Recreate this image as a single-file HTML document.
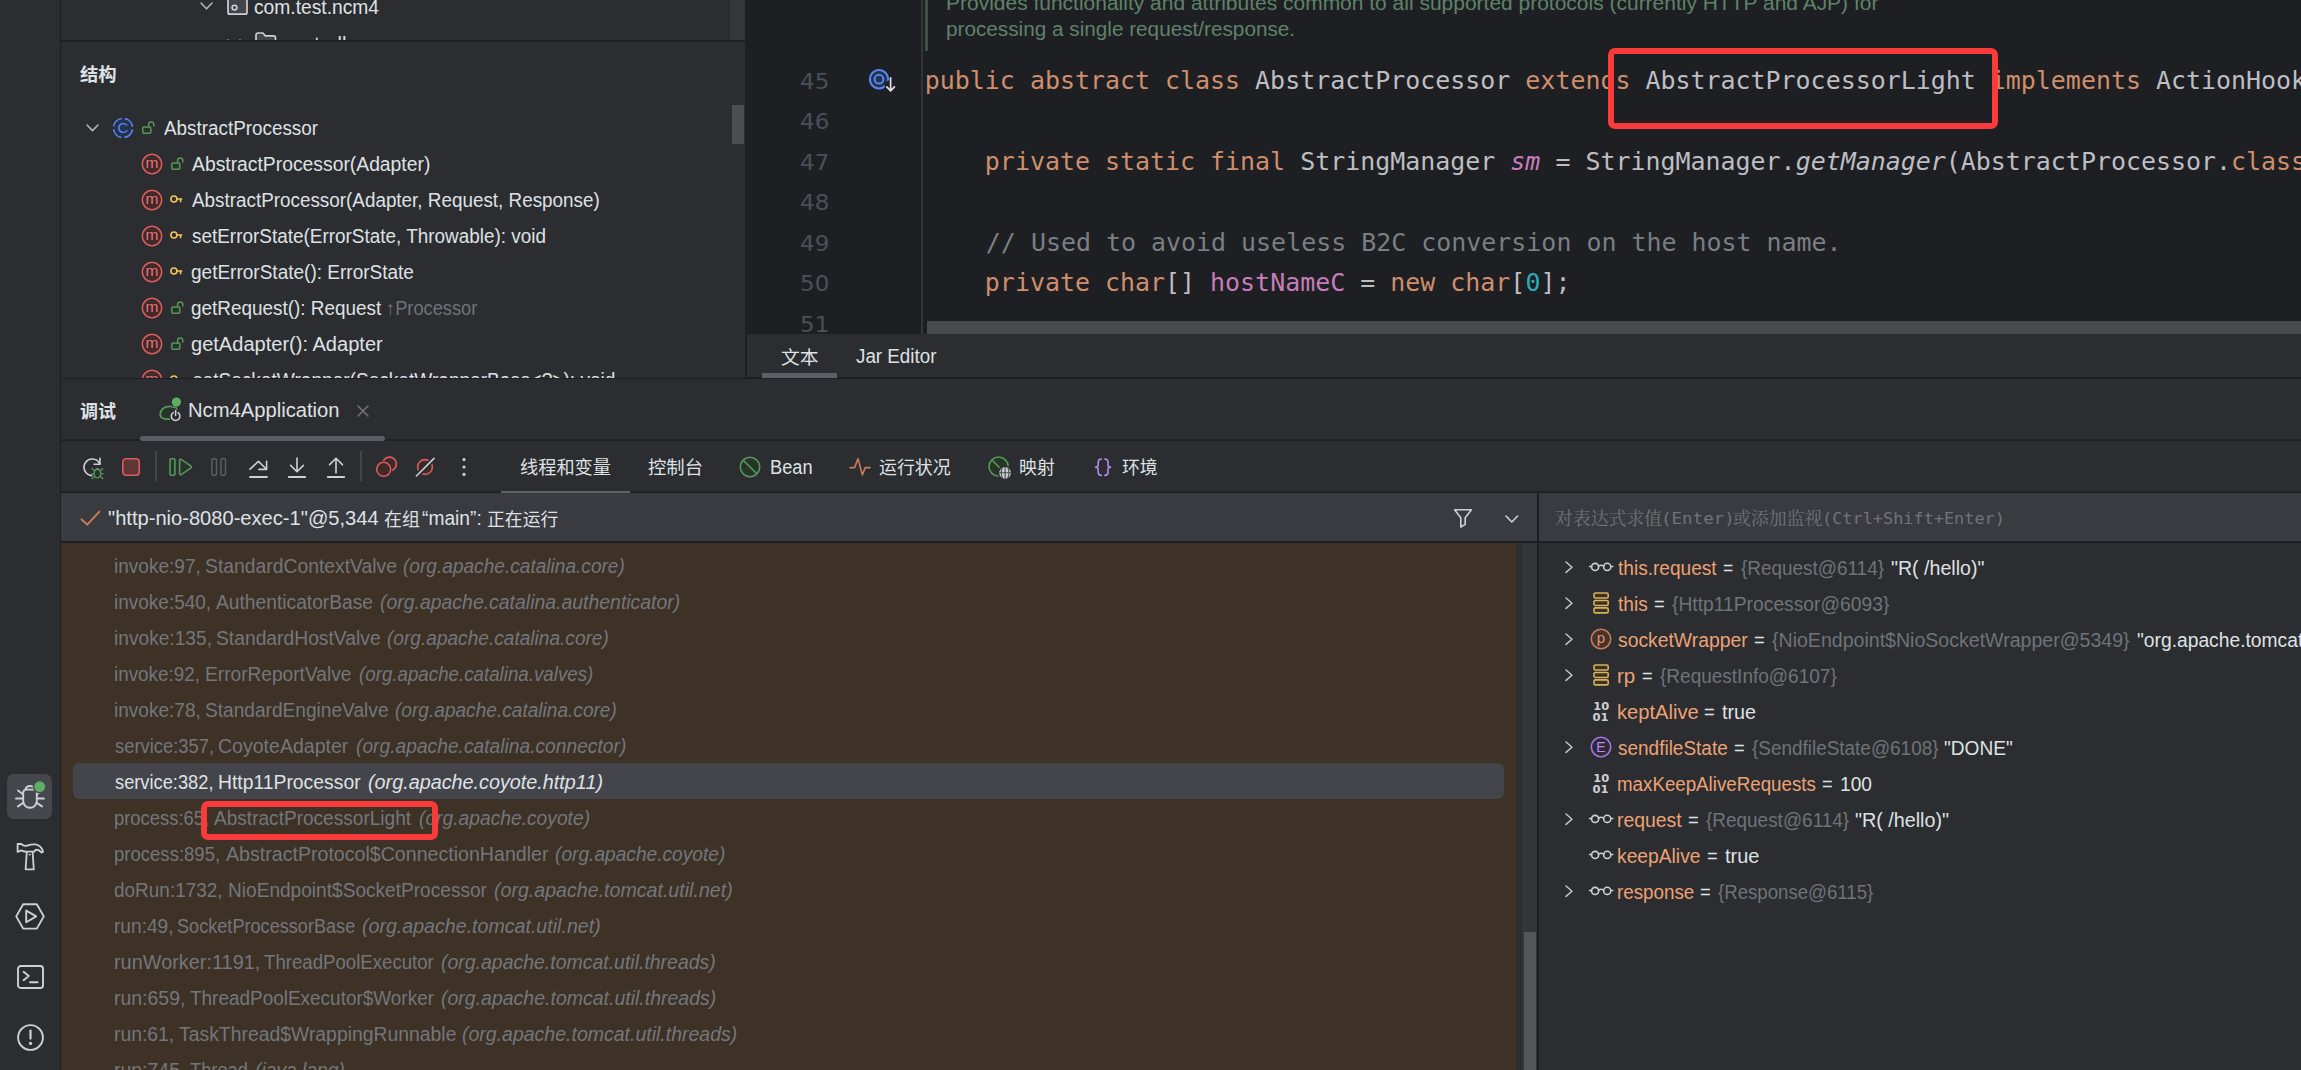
<!DOCTYPE html>
<html lang="zh-CN"><head><meta charset="utf-8"><title>IDE Debug</title>
<style>
html,body{margin:0;padding:0;background:#2b2d30;}
body{width:2301px;height:1070px;position:relative;overflow:hidden;}
#root{position:absolute;left:0;top:0;width:2301px;height:1070px;overflow:hidden;}
.t{position:absolute;white-space:pre;line-height:1.2;transform-origin:0 0;display:block;}
.clip{position:absolute;overflow:hidden;}
svg{display:block;overflow:visible}
</style></head><body><div id="root">
<div style="position:absolute;left:0px;top:0px;width:2301px;height:1070px;background:#2b2d30;"></div>
<div style="position:absolute;left:60px;top:0px;width:1px;height:1070px;background:#1e1f22;"></div>
<div style="position:absolute;left:730px;top:0px;width:15px;height:40px;background:#343639;"></div>
<div style="position:absolute;left:61px;top:40px;width:684px;height:2px;background:#1e1f22;"></div>
<div style="position:absolute;left:732px;top:105px;width:12px;height:39px;background:#4d4e51;"></div>
<div style="position:absolute;left:745px;top:0px;width:1556px;height:378px;background:#1e1f22;"></div>
<div style="position:absolute;left:921px;top:0px;width:2px;height:334px;background:#313438;"></div>
<div style="position:absolute;left:925px;top:0px;width:3px;height:51px;background:#3d5244;"></div>
<div style="position:absolute;left:927px;top:321px;width:1374px;height:13px;background:#48494c;"></div>
<div style="position:absolute;left:747px;top:334px;width:1554px;height:43px;background:#2b2d30;"></div>
<div style="position:absolute;left:61px;top:378px;width:2240px;height:1px;background:#1e1f22;"></div>
<div style="position:absolute;left:745px;top:377px;width:1556px;height:1px;background:#1e1f22;"></div>
<div style="position:absolute;left:762px;top:373px;width:75px;height:5px;background:#5c5f66;"></div>
<div style="position:absolute;left:61px;top:439px;width:2240px;height:1px;background:#222326;"></div>
<div style="position:absolute;left:61px;top:440px;width:2240px;height:1px;background:#1f2023;"></div>
<div style="position:absolute;left:140px;top:436px;width:245px;height:5px;background:#5a5d63;border-radius:3px;"></div>
<div style="position:absolute;left:61px;top:491px;width:2240px;height:1px;background:#242629;"></div>
<div style="position:absolute;left:61px;top:492px;width:2240px;height:1px;background:#1e1f22;"></div>
<div style="position:absolute;left:501px;top:491px;width:129px;height:2px;background:#5e6168;"></div>
<div style="position:absolute;left:61px;top:493px;width:1476px;height:48px;background:#393b40;"></div>
<div style="position:absolute;left:1539px;top:493px;width:762px;height:48px;background:#393b40;"></div>
<div style="position:absolute;left:61px;top:541px;width:2240px;height:2px;background:#1e1f22;"></div>
<div style="position:absolute;left:61px;top:543px;width:1455px;height:527px;background:#3e3125;"></div>
<div style="position:absolute;left:1522px;top:543px;width:15px;height:527px;background:#333539;"></div>
<div style="position:absolute;left:1524px;top:932px;width:12px;height:138px;background:#555658;"></div>
<div style="position:absolute;left:1537px;top:492px;width:2px;height:578px;background:#1e1f22;"></div>
<div style="position:absolute;left:73px;top:763px;width:1431px;height:36px;background:#43454a;border-radius:6px;"></div>
<div style="position:absolute;left:7.3px;top:774px;width:45px;height:45px;background:#45474c;border-radius:7px;"></div>
<div style="position:absolute;left:155px;top:451px;width:2px;height:30px;background:#43454a;"></div>
<div style="position:absolute;left:360px;top:451px;width:2px;height:30px;background:#43454a;"></div>
<svg style="position:absolute;left:15px;top:780px;" width="32" height="32" viewBox="0 0 32 32" fill="none"><path d="M8.2 12.6 A3 3 0 0 1 11.2 9.6 H18.8 A3 3 0 0 1 21.8 12.6 V21 A6.8 6.8 0 0 1 8.2 21 Z" stroke="#ced0d6" stroke-width="1.9"/><path d="M10.4 9.4 A4.8 4.8 0 0 1 19.6 9.4" stroke="#ced0d6" stroke-width="1.9"/><path d="M8 18.5 H1 M22 18.5 H29 M8 14.2 L3 10.6 M22 14.2 L27 10.6 M8.3 22.8 L3 26.4 M21.7 22.8 L27 26.4" stroke="#ced0d6" stroke-width="1.9" stroke-linecap="round"/><circle cx="24.7" cy="6.6" r="7" fill="#45474c"/><circle cx="24.7" cy="6.6" r="5.4" fill="#5fad65"/></svg>
<svg style="position:absolute;left:16px;top:842px;" width="30" height="30" viewBox="0 0 30 30" fill="none"><path d="M1.6 2 H5.2 C7 3.6 9 4.2 11 3.6 C14 2.6 17 2 19.4 2.4 C23.6 3.2 26.2 6 27 10 L25.4 10.6 C24 8.6 22 7.6 20 7.6 L18.2 9.6 H10.2 C8 9.6 6.6 8.8 5.2 8.4 L1.6 9.8 Z" stroke="#ced0d6" stroke-width="1.8" stroke-linejoin="round"/><path d="M10.8 9.8 L9.6 27.4 H17.8 L16.6 9.8" stroke="#ced0d6" stroke-width="1.8" stroke-linejoin="round"/><path d="M12.6 12.6 H14.8" stroke="#ced0d6" stroke-width="1.4"/></svg>
<svg style="position:absolute;left:15px;top:903px;" width="30" height="27" viewBox="0 0 30 27" fill="none"><path d="M8.2 1.2 H21.8 L28.8 13.4 L21.8 25.6 H8.2 L1.2 13.4 Z" stroke="#ced0d6" stroke-width="1.9" stroke-linejoin="round"/><path d="M11.2 7.6 V19.2 L21.2 13.4 Z" stroke="#ced0d6" stroke-width="1.9" stroke-linejoin="round"/></svg>
<svg style="position:absolute;left:16.5px;top:965px;" width="27" height="24" viewBox="0 0 27 24" fill="none"><rect x="1" y="1" width="25" height="22" rx="2.8" stroke="#ced0d6" stroke-width="1.9"/><path d="M6.6 6.8 L11.8 11 L6.6 15.2 M13 17.2 H20.6" stroke="#ced0d6" stroke-width="1.9" stroke-linecap="round" stroke-linejoin="round"/></svg>
<svg style="position:absolute;left:15.5px;top:1022.5px;" width="29" height="29" viewBox="0 0 29 29" fill="none"><circle cx="14.5" cy="14.5" r="12.4" stroke="#ced0d6" stroke-width="1.9"/><path d="M14.5 7.6 V15.6" stroke="#ced0d6" stroke-width="2.2" stroke-linecap="round"/><circle cx="14.5" cy="20.4" r="1.6" fill="#ced0d6"/></svg>
<svg style="position:absolute;left:198.5px;top:1.3000000000000003px;" width="15" height="9.8" viewBox="0 0 15 9.8" fill="none"><path d="M2 2 L7.5 7.8 L13 2" stroke="#b0b3ba" stroke-width="1.6" stroke-linecap="round" stroke-linejoin="round"/></svg>
<svg style="position:absolute;left:226.5px;top:0px;" width="22" height="16" viewBox="0 -1 22 16" fill="none"><path d="M1 -4 H7.5 L9.8 -1.8 H18 A2 2 0 0 1 20 0.2 V11.2 A2 2 0 0 1 18 13.2 H3 A2 2 0 0 1 1 11.2 Z" fill="#43454a" stroke="#ced0d6" stroke-width="1.7"/><circle cx="7.5" cy="6.6" r="2.4" stroke="#ced0d6" stroke-width="1.6"/></svg>
<div style="position:absolute;left:61px;top:30px;width:684px;height:10px;overflow:hidden;">
<svg style="position:absolute;left:165px;top:8px;" width="16" height="12" viewBox="0 0 16 12" fill="none"><path d="M2 2 L8 8.5 L14 2" stroke="#b0b3ba" stroke-width="1.6" stroke-linecap="round" stroke-linejoin="round"/></svg>
<svg style="position:absolute;left:194px;top:2.4px;" width="22" height="18" viewBox="0 0 22 18" fill="none"><path d="M1 3 A2 2 0 0 1 3 1 H7.8 L10.4 3.8 H18.5 A2 2 0 0 1 20.5 5.8 V16 H1 Z" fill="#43454a" stroke="#ced0d6" stroke-width="1.7"/></svg>
</div>
<svg style="position:absolute;left:84.6px;top:122.9px;" width="15" height="9.6" viewBox="0 0 15 9.6" fill="none"><path d="M2 2 L7.5 7.6 L13 2" stroke="#b0b3ba" stroke-width="1.6" stroke-linecap="round" stroke-linejoin="round"/></svg>
<svg style="position:absolute;left:111.1px;top:115.9px;" width="24" height="24" viewBox="0 0 24 24" fill="none"><circle cx="12" cy="12" r="9.6" fill="#25324d" stroke="#548af7" stroke-width="1.6" stroke-dasharray="12.08 3.00" stroke-dashoffset="-1.50" transform="rotate(0 12 12)"/><text x="12" y="17.3" text-anchor="middle" font-family="Liberation Sans, sans-serif" font-size="15" font-weight="normal" fill="#548af7">C</text></svg>
<svg style="position:absolute;left:142px;top:121px;" width="14" height="14" viewBox="0 0 14 14" fill="none"><rect x="0.8" y="6" width="8" height="6.2" rx="1" fill="#253627" stroke="#57965c" stroke-width="1.5"/><path d="M6.6 6 V3.6 A2.6 2.6 0 0 1 11.8 3.6 V5" stroke="#57965c" stroke-width="1.5" stroke-linecap="round"/></svg>
<svg style="position:absolute;left:140px;top:152px;" width="24" height="24" viewBox="0 0 24 24" fill="none"><circle cx="12" cy="12" r="9.7" fill="#402929" stroke="#db5c5c" stroke-width="1.6"/><text x="12" y="16.2" text-anchor="middle" font-family="Liberation Sans, sans-serif" font-size="15.5" font-weight="normal" fill="#e8737a">m</text></svg>
<svg style="position:absolute;left:170.5px;top:157px;" width="14" height="14" viewBox="0 0 14 14" fill="none"><rect x="0.8" y="6" width="8" height="6.2" rx="1" fill="#253627" stroke="#57965c" stroke-width="1.5"/><path d="M6.6 6 V3.6 A2.6 2.6 0 0 1 11.8 3.6 V5" stroke="#57965c" stroke-width="1.5" stroke-linecap="round"/></svg>
<svg style="position:absolute;left:140px;top:188px;" width="24" height="24" viewBox="0 0 24 24" fill="none"><circle cx="12" cy="12" r="9.7" fill="#402929" stroke="#db5c5c" stroke-width="1.6"/><text x="12" y="16.2" text-anchor="middle" font-family="Liberation Sans, sans-serif" font-size="15.5" font-weight="normal" fill="#e8737a">m</text></svg>
<svg style="position:absolute;left:169.6px;top:195.4px;" width="14" height="9" viewBox="0 0 14 9" fill="none"><circle cx="3.9" cy="4" r="3" stroke="#f2c55c" stroke-width="1.6"/><path d="M7 4 H12.2 M10.6 4 V7.2" stroke="#f2c55c" stroke-width="1.6"/></svg>
<svg style="position:absolute;left:140px;top:224px;" width="24" height="24" viewBox="0 0 24 24" fill="none"><circle cx="12" cy="12" r="9.7" fill="#402929" stroke="#db5c5c" stroke-width="1.6"/><text x="12" y="16.2" text-anchor="middle" font-family="Liberation Sans, sans-serif" font-size="15.5" font-weight="normal" fill="#e8737a">m</text></svg>
<svg style="position:absolute;left:169.6px;top:231.4px;" width="14" height="9" viewBox="0 0 14 9" fill="none"><circle cx="3.9" cy="4" r="3" stroke="#f2c55c" stroke-width="1.6"/><path d="M7 4 H12.2 M10.6 4 V7.2" stroke="#f2c55c" stroke-width="1.6"/></svg>
<svg style="position:absolute;left:140px;top:260px;" width="24" height="24" viewBox="0 0 24 24" fill="none"><circle cx="12" cy="12" r="9.7" fill="#402929" stroke="#db5c5c" stroke-width="1.6"/><text x="12" y="16.2" text-anchor="middle" font-family="Liberation Sans, sans-serif" font-size="15.5" font-weight="normal" fill="#e8737a">m</text></svg>
<svg style="position:absolute;left:169.6px;top:267.4px;" width="14" height="9" viewBox="0 0 14 9" fill="none"><circle cx="3.9" cy="4" r="3" stroke="#f2c55c" stroke-width="1.6"/><path d="M7 4 H12.2 M10.6 4 V7.2" stroke="#f2c55c" stroke-width="1.6"/></svg>
<svg style="position:absolute;left:140px;top:296px;" width="24" height="24" viewBox="0 0 24 24" fill="none"><circle cx="12" cy="12" r="9.7" fill="#402929" stroke="#db5c5c" stroke-width="1.6"/><text x="12" y="16.2" text-anchor="middle" font-family="Liberation Sans, sans-serif" font-size="15.5" font-weight="normal" fill="#e8737a">m</text></svg>
<svg style="position:absolute;left:170.5px;top:301px;" width="14" height="14" viewBox="0 0 14 14" fill="none"><rect x="0.8" y="6" width="8" height="6.2" rx="1" fill="#253627" stroke="#57965c" stroke-width="1.5"/><path d="M6.6 6 V3.6 A2.6 2.6 0 0 1 11.8 3.6 V5" stroke="#57965c" stroke-width="1.5" stroke-linecap="round"/></svg>
<svg style="position:absolute;left:140px;top:332px;" width="24" height="24" viewBox="0 0 24 24" fill="none"><circle cx="12" cy="12" r="9.7" fill="#402929" stroke="#db5c5c" stroke-width="1.6"/><text x="12" y="16.2" text-anchor="middle" font-family="Liberation Sans, sans-serif" font-size="15.5" font-weight="normal" fill="#e8737a">m</text></svg>
<svg style="position:absolute;left:170.5px;top:337px;" width="14" height="14" viewBox="0 0 14 14" fill="none"><rect x="0.8" y="6" width="8" height="6.2" rx="1" fill="#253627" stroke="#57965c" stroke-width="1.5"/><path d="M6.6 6 V3.6 A2.6 2.6 0 0 1 11.8 3.6 V5" stroke="#57965c" stroke-width="1.5" stroke-linecap="round"/></svg>
<div style="position:absolute;left:61px;top:362px;width:671px;height:16px;overflow:hidden;">
<svg style="position:absolute;left:79px;top:6px;" width="24" height="24" viewBox="0 0 24 24" fill="none"><circle cx="12" cy="12" r="9.7" fill="#402929" stroke="#db5c5c" stroke-width="1.6"/><text x="12" y="16.2" text-anchor="middle" font-family="Liberation Sans, sans-serif" font-size="15.5" font-weight="normal" fill="#e8737a">m</text></svg>
<svg style="position:absolute;left:108.6px;top:13.399999999999977px;" width="14" height="9" viewBox="0 0 14 9" fill="none"><circle cx="3.9" cy="4" r="3" stroke="#f2c55c" stroke-width="1.6"/><path d="M7 4 H12.2 M10.6 4 V7.2" stroke="#f2c55c" stroke-width="1.6"/></svg>
</div>
<svg style="position:absolute;left:868px;top:68px;" width="30" height="26" viewBox="0 0 30 26" fill="none"><circle cx="11" cy="11.2" r="9.2" fill="#25324d" stroke="#548af7" stroke-width="2"/><circle cx="11" cy="11.2" r="4.4" stroke="#548af7" stroke-width="2" fill="#25324d"/><circle cx="22.6" cy="18" r="6" fill="#1e1f22"/><path d="M22.6 9.8 V22.6 M18.8 18.8 L22.6 22.8 L26.4 18.8" stroke="#dcdee2" stroke-width="1.7" stroke-linecap="round" stroke-linejoin="round"/></svg>
<svg style="position:absolute;left:159px;top:396.5px;" width="24" height="26" viewBox="0 0 24 26" fill="none"><path d="M12 9.5 C6 9 1.2 12.2 1.2 17.2 C1.2 21.5 5 22.3 10.5 22.1" stroke="#57965c" stroke-width="1.7" fill="#253627" stroke-linecap="round"/><path d="M12 9.5 C13.5 10.5 15.5 10.6 17 9.6 L18.2 14" stroke="#57965c" stroke-width="1.5" fill="none"/><circle cx="17.4" cy="5" r="4.6" fill="#5fad65"/><circle cx="16.6" cy="18.6" r="6.2" fill="#2b2d30"/><path d="M14.2 15.6 A4.3 4.3 0 1 0 19 15.6 M16.6 13.4 V18.4" stroke="#ced0d6" stroke-width="1.5" stroke-linecap="round"/></svg>
<svg style="position:absolute;left:356px;top:404px;" width="14" height="14" viewBox="0 0 14 14" fill="none"><path d="M2 2 L12 12 M12 2 L2 12" stroke="#71757b" stroke-width="1.5" stroke-linecap="round"/></svg>
<svg style="position:absolute;left:80.8px;top:455px;" width="24" height="26" viewBox="0 0 24 26" fill="none"><path d="M10.6 20.6 A8.3 8.3 0 1 1 18.6 8.4" stroke="#ced0d6" stroke-width="1.6" stroke-linecap="round"/><path d="M13.2 9.3 H19 V3.4" stroke="#ced0d6" stroke-width="1.6" stroke-linecap="round" stroke-linejoin="round"/><ellipse cx="16.4" cy="18.6" rx="3.3" ry="4.3" fill="#253627" stroke="#57965c" stroke-width="1.4"/><path d="M13.2 15.6 L11 13.6 M19.6 15.6 L21.8 13.6 M13 18.8 H10.6 M19.8 18.8 H22.2 M13.4 21.6 L11 23.6 M19.4 21.6 L21.8 23.6 M14.6 14.8 A2 2 0 0 1 18.2 14.8" stroke="#57965c" stroke-width="1.3" stroke-linecap="round"/></svg>
<svg style="position:absolute;left:121px;top:457px;" width="20" height="20" viewBox="0 0 20 20" fill="none"><rect x="1.8" y="1.8" width="16.4" height="16.4" rx="3.2" fill="#5e3638" stroke="#db5c5c" stroke-width="1.6"/></svg>
<svg style="position:absolute;left:168.9px;top:457px;" width="25" height="20" viewBox="0 0 25 20" fill="none"><rect x="1" y="1.8" width="4.9" height="16.4" rx="1.2" fill="#253627" stroke="#57965c" stroke-width="1.6"/><path d="M10.6 3.2 V16.8 A1 1 0 0 0 12.1 17.6 L22 10.8 A1 1 0 0 0 22 9.2 L12.1 2.4 A1 1 0 0 0 10.6 3.2 Z" fill="#253627" stroke="#57965c" stroke-width="1.6" stroke-linejoin="round"/></svg>
<svg style="position:absolute;left:211.3px;top:457px;" width="17" height="20" viewBox="0 0 17 20" fill="none"><rect x="0.9" y="1.8" width="4.6" height="16.4" rx="1.2" stroke="#5a5d63" stroke-width="1.5"/><rect x="9.9" y="1.8" width="4.6" height="16.4" rx="1.2" stroke="#5a5d63" stroke-width="1.5"/></svg>
<svg style="position:absolute;left:248.7px;top:460.3px;" width="20" height="19" viewBox="0 0 20 19" fill="none"><path d="M1 9.2 L9.4 1.4 L17.4 9" stroke="#ced0d6" stroke-width="1.6" stroke-linecap="round" stroke-linejoin="round"/><path d="M17.6 1.4 V9.4 H9.8" stroke="#ced0d6" stroke-width="1.6" stroke-linecap="round" stroke-linejoin="round"/><path d="M1 17 H18" stroke="#ced0d6" stroke-width="1.8" stroke-linecap="round"/></svg>
<svg style="position:absolute;left:287px;top:456px;" width="20" height="23" viewBox="0 0 20 23" fill="none"><path d="M10 2 V15.4 M3.6 9.4 L10 15.8 L16.4 9.4" stroke="#ced0d6" stroke-width="1.6" stroke-linecap="round" stroke-linejoin="round"/><path d="M1.8 21 H18.2" stroke="#ced0d6" stroke-width="1.8" stroke-linecap="round"/></svg>
<svg style="position:absolute;left:326px;top:456px;" width="20" height="23" viewBox="0 0 20 23" fill="none"><path d="M10 17 V2.4 M3.6 8.6 L10 2.2 L16.4 8.6" stroke="#ced0d6" stroke-width="1.6" stroke-linecap="round" stroke-linejoin="round"/><path d="M1.8 21 H18.2" stroke="#ced0d6" stroke-width="1.8" stroke-linecap="round"/></svg>
<svg style="position:absolute;left:374px;top:456px;" width="25" height="24" viewBox="0 0 25 24" fill="none"><circle cx="15.5" cy="8" r="6.9" fill="#402929" stroke="#db5c5c" stroke-width="1.6"/><circle cx="9.7" cy="13.3" r="8.6" fill="#2b2d30"/><circle cx="9.7" cy="13.3" r="7" fill="#402929" stroke="#db5c5c" stroke-width="1.6"/></svg>
<svg style="position:absolute;left:414px;top:456px;" width="22" height="22" viewBox="0 0 22 22" fill="none"><circle cx="11" cy="11" r="7.4" fill="#402929" stroke="#db5c5c" stroke-width="1.6"/><path d="M2 20.4 L20.4 2" stroke="#2b2d30" stroke-width="5"/><path d="M2.4 20 L20 2.4" stroke="#ced0d6" stroke-width="1.6" stroke-linecap="round"/></svg>
<svg style="position:absolute;left:460px;top:456px;" width="8" height="22" viewBox="0 0 8 22" fill="none"><circle cx="4" cy="3.6" r="1.6" fill="#ced0d6"/><circle cx="4" cy="11" r="1.6" fill="#ced0d6"/><circle cx="4" cy="18.4" r="1.6" fill="#ced0d6"/></svg>
<svg style="position:absolute;left:738px;top:455px;" width="24" height="24" viewBox="0 0 24 24" fill="none"><circle cx="12" cy="12" r="9.7" fill="#253627" stroke="#57965c" stroke-width="1.6"/><path d="M5.2 5.2 L18.8 18.8" stroke="#57965c" stroke-width="1.6"/></svg>
<svg style="position:absolute;left:849px;top:456px;" width="22" height="22" viewBox="0 0 22 22" fill="none"><path d="M1 11.6 H5.6 L9 2.6 L13.4 19 L16.2 11.6 H21" stroke="#c77d55" stroke-width="1.6" stroke-linecap="round" stroke-linejoin="round"/></svg>
<svg style="position:absolute;left:988px;top:456px;" width="24" height="24" viewBox="0 0 24 24" fill="none"><circle cx="10.6" cy="10.6" r="9.6" fill="#253627" stroke="#57965c" stroke-width="1.6"/><path d="M4.2 4.2 L12.6 12.6" stroke="#57965c" stroke-width="1.6"/><circle cx="17.1" cy="16.8" r="7.4" fill="#2b2d30"/><circle cx="17.1" cy="16.8" r="5.9" fill="#ced0d6"/><path d="M11.2 16.8 H23 M17.1 10.9 V22.7 M14.4 11.6 C12.9 14.8 12.9 18.8 14.4 22 M19.8 11.6 C21.3 14.8 21.3 18.8 19.8 22" stroke="#45474c" stroke-width="1.1"/></svg>
<svg style="position:absolute;left:1093.8px;top:457.7px;" width="19" height="19" viewBox="0 0 19 19" fill="none"><path d="M7.4 1 C5 1 4.2 2 4.2 4.2 V7 C4.2 8.6 3.4 9.2 1 9.2 C3.4 9.2 4.2 9.8 4.2 11.4 V14.2 C4.2 16.4 5 17.4 7.4 17.4" stroke="#b58af0" stroke-width="1.6" stroke-linecap="round"/><path d="M10.8 1 C13.2 1 14 2 14 4.2 V7 C14 8.6 14.8 9.2 17.2 9.2 C14.8 9.2 14 9.8 14 11.4 V14.2 C14 16.4 13.2 17.4 10.8 17.4" stroke="#b58af0" stroke-width="1.6" stroke-linecap="round"/></svg>
<svg style="position:absolute;left:80px;top:509px;" width="22" height="18" viewBox="0 0 22 18" fill="none"><path d="M1.6 10.4 L7.2 15.6 L19.4 2.6" stroke="#c77d55" stroke-width="2" stroke-linecap="round" stroke-linejoin="round"/></svg>
<svg style="position:absolute;left:1453px;top:507.6px;" width="20" height="21" viewBox="0 0 20 21" fill="none"><path d="M1.6 1.8 H18.4 L12.2 9.8 V16.4 L7.8 19 V9.8 Z" stroke="#ced0d6" stroke-width="1.6" stroke-linejoin="round"/></svg>
<svg style="position:absolute;left:1504.2px;top:513.9px;" width="15.6" height="10" viewBox="0 0 15.6 10" fill="none"><path d="M2 2 L7.8 8 L13.6 2" stroke="#ced0d6" stroke-width="1.6" stroke-linecap="round" stroke-linejoin="round"/></svg>
<svg style="position:absolute;left:1563.6px;top:560.0px;" width="10.0" height="14.4" viewBox="0 0 10.0 14.4" fill="none"><path d="M2 2 L8.0 7.2 L2 12.4" stroke="#c4c7cd" stroke-width="1.5" stroke-linecap="round" stroke-linejoin="round"/></svg>
<svg style="position:absolute;left:1588.8px;top:560.8px;" width="24.4" height="12" viewBox="0 0 24.4 12" fill="none"><circle cx="6.1" cy="5.9" r="3.55" stroke="#ced0d6" stroke-width="1.6"/><circle cx="18.2" cy="5.9" r="3.55" stroke="#ced0d6" stroke-width="1.5"/><path d="M9.6 5.2 C11 4.2 13.3 4.2 14.7 5.2 M2.5 5.6 H0.5 M21.8 5.6 H23.8" stroke="#ced0d6" stroke-width="1.5" stroke-linecap="round"/></svg>
<svg style="position:absolute;left:1563.6px;top:596.0px;" width="10.0" height="14.4" viewBox="0 0 10.0 14.4" fill="none"><path d="M2 2 L8.0 7.2 L2 12.4" stroke="#c4c7cd" stroke-width="1.5" stroke-linecap="round" stroke-linejoin="round"/></svg>
<svg style="position:absolute;left:1592.9px;top:591.9px;" width="17" height="23" viewBox="0 0 17 23" fill="none"><rect x="1" y="1" width="14.2" height="5" rx="1.4" fill="#3d3223" stroke="#d9b25c" stroke-width="1.6"/><rect x="1" y="8.45" width="14.2" height="5" rx="1.4" fill="#3d3223" stroke="#d9b25c" stroke-width="1.6"/><rect x="1" y="15.9" width="14.2" height="5" rx="1.4" fill="#3d3223" stroke="#d9b25c" stroke-width="1.6"/></svg>
<svg style="position:absolute;left:1563.6px;top:632.0px;" width="10.0" height="14.4" viewBox="0 0 10.0 14.4" fill="none"><path d="M2 2 L8.0 7.2 L2 12.4" stroke="#c4c7cd" stroke-width="1.5" stroke-linecap="round" stroke-linejoin="round"/></svg>
<svg style="position:absolute;left:1589px;top:627px;" width="24" height="24" viewBox="0 0 24 24" fill="none"><circle cx="12" cy="12" r="9.7" fill="#45322b" stroke="#c77d55" stroke-width="1.6"/><text x="12" y="15.6" text-anchor="middle" font-family="Liberation Sans, sans-serif" font-size="15" font-weight="normal" fill="#e0956f">p</text></svg>
<svg style="position:absolute;left:1563.6px;top:668.0px;" width="10.0" height="14.4" viewBox="0 0 10.0 14.4" fill="none"><path d="M2 2 L8.0 7.2 L2 12.4" stroke="#c4c7cd" stroke-width="1.5" stroke-linecap="round" stroke-linejoin="round"/></svg>
<svg style="position:absolute;left:1592.9px;top:663.9px;" width="17" height="23" viewBox="0 0 17 23" fill="none"><rect x="1" y="1" width="14.2" height="5" rx="1.4" fill="#3d3223" stroke="#d9b25c" stroke-width="1.6"/><rect x="1" y="8.45" width="14.2" height="5" rx="1.4" fill="#3d3223" stroke="#d9b25c" stroke-width="1.6"/><rect x="1" y="15.9" width="14.2" height="5" rx="1.4" fill="#3d3223" stroke="#d9b25c" stroke-width="1.6"/></svg>
<svg style="position:absolute;left:1592.8px;top:700.9000000000001px;" width="17" height="21" viewBox="0 0 17 21" fill="none"><text x="0.2" y="8.6" font-family="DejaVu Sans, Liberation Sans, sans-serif" font-weight="bold" font-size="10.4" fill="#ced0d6" textLength="16" lengthAdjust="spacingAndGlyphs">10</text><text x="-0.4" y="20.4" font-family="DejaVu Sans, Liberation Sans, sans-serif" font-weight="bold" font-size="10.4" fill="#ced0d6" textLength="16" lengthAdjust="spacingAndGlyphs">01</text></svg>
<svg style="position:absolute;left:1563.6px;top:740.0px;" width="10.0" height="14.4" viewBox="0 0 10.0 14.4" fill="none"><path d="M2 2 L8.0 7.2 L2 12.4" stroke="#c4c7cd" stroke-width="1.5" stroke-linecap="round" stroke-linejoin="round"/></svg>
<svg style="position:absolute;left:1589px;top:735px;" width="24" height="24" viewBox="0 0 24 24" fill="none"><circle cx="12" cy="12" r="9.7" fill="#2f2936" stroke="#a571e6" stroke-width="1.6"/><text x="12" y="17" text-anchor="middle" font-family="Liberation Sans, sans-serif" font-size="14" font-weight="normal" fill="#b58af0">E</text></svg>
<svg style="position:absolute;left:1592.8px;top:772.9000000000001px;" width="17" height="21" viewBox="0 0 17 21" fill="none"><text x="0.2" y="8.6" font-family="DejaVu Sans, Liberation Sans, sans-serif" font-weight="bold" font-size="10.4" fill="#ced0d6" textLength="16" lengthAdjust="spacingAndGlyphs">10</text><text x="-0.4" y="20.4" font-family="DejaVu Sans, Liberation Sans, sans-serif" font-weight="bold" font-size="10.4" fill="#ced0d6" textLength="16" lengthAdjust="spacingAndGlyphs">01</text></svg>
<svg style="position:absolute;left:1563.6px;top:812.0px;" width="10.0" height="14.4" viewBox="0 0 10.0 14.4" fill="none"><path d="M2 2 L8.0 7.2 L2 12.4" stroke="#c4c7cd" stroke-width="1.5" stroke-linecap="round" stroke-linejoin="round"/></svg>
<svg style="position:absolute;left:1588.8px;top:812.8px;" width="24.4" height="12" viewBox="0 0 24.4 12" fill="none"><circle cx="6.1" cy="5.9" r="3.55" stroke="#ced0d6" stroke-width="1.6"/><circle cx="18.2" cy="5.9" r="3.55" stroke="#ced0d6" stroke-width="1.5"/><path d="M9.6 5.2 C11 4.2 13.3 4.2 14.7 5.2 M2.5 5.6 H0.5 M21.8 5.6 H23.8" stroke="#ced0d6" stroke-width="1.5" stroke-linecap="round"/></svg>
<svg style="position:absolute;left:1588.8px;top:848.8px;" width="24.4" height="12" viewBox="0 0 24.4 12" fill="none"><circle cx="6.1" cy="5.9" r="3.55" stroke="#ced0d6" stroke-width="1.6"/><circle cx="18.2" cy="5.9" r="3.55" stroke="#ced0d6" stroke-width="1.5"/><path d="M9.6 5.2 C11 4.2 13.3 4.2 14.7 5.2 M2.5 5.6 H0.5 M21.8 5.6 H23.8" stroke="#ced0d6" stroke-width="1.5" stroke-linecap="round"/></svg>
<svg style="position:absolute;left:1563.6px;top:884.0px;" width="10.0" height="14.4" viewBox="0 0 10.0 14.4" fill="none"><path d="M2 2 L8.0 7.2 L2 12.4" stroke="#c4c7cd" stroke-width="1.5" stroke-linecap="round" stroke-linejoin="round"/></svg>
<svg style="position:absolute;left:1588.8px;top:884.8px;" width="24.4" height="12" viewBox="0 0 24.4 12" fill="none"><circle cx="6.1" cy="5.9" r="3.55" stroke="#ced0d6" stroke-width="1.6"/><circle cx="18.2" cy="5.9" r="3.55" stroke="#ced0d6" stroke-width="1.5"/><path d="M9.6 5.2 C11 4.2 13.3 4.2 14.7 5.2 M2.5 5.6 H0.5 M21.8 5.6 H23.8" stroke="#ced0d6" stroke-width="1.5" stroke-linecap="round"/></svg>
<span class="t" style="left:80.00px;top:64.60px;font-family:'Liberation Sans', 'Noto Sans CJK SC', sans-serif;font-size:18px;font-weight:bold;color:#dfe1e5;transform:scaleX(1.0171)">结构</span>
<span class="t" style="left:164.40px;top:117.00px;font-family:'Liberation Sans', sans-serif;font-size:19.4px;color:#dfe1e5;transform:scaleX(0.9723)">AbstractProcessor</span>
<span class="t" style="left:192.20px;top:153.00px;font-family:'Liberation Sans', sans-serif;font-size:19.4px;color:#dfe1e5;transform:scaleX(0.9962)">AbstractProcessor(Adapter)</span>
<span class="t" style="left:192.20px;top:189.00px;font-family:'Liberation Sans', sans-serif;font-size:19.4px;color:#dfe1e5;transform:scaleX(0.9725)">AbstractProcessor(Adapter, Request, Response)</span>
<span class="t" style="left:192.20px;top:225.00px;font-family:'Liberation Sans', sans-serif;font-size:19.4px;color:#dfe1e5;transform:scaleX(0.9757)">setErrorState(ErrorState, Throwable): void</span>
<span class="t" style="left:191.22px;top:261.00px;font-family:'Liberation Sans', sans-serif;font-size:19.4px;color:#dfe1e5;transform:scaleX(0.9805)">getErrorState(): ErrorState</span>
<span class="t" style="left:191.22px;top:297.00px;font-family:'Liberation Sans', sans-serif;font-size:19.4px;color:#dfe1e5;transform:scaleX(0.9753)">getRequest(): Request</span>
<span class="t" style="left:386.32px;top:297.00px;font-family:'Liberation Sans', 'Noto Sans CJK SC', sans-serif;font-size:19.4px;color:#6f737a;transform:scaleX(0.9421)">↑Processor</span>
<span class="t" style="left:191.17px;top:333.00px;font-family:'Liberation Sans', sans-serif;font-size:19.4px;color:#dfe1e5;transform:scaleX(1.0341)">getAdapter(): Adapter</span>
<span class="t" style="left:945.82px;top:-8.50px;font-family:'Liberation Sans', sans-serif;font-size:19.5px;color:#5f826b;transform:scaleX(1.0758)">Provides functionality and attributes common to all supported protocols (currently HTTP and AJP) for</span>
<span class="t" style="left:945.84px;top:17.60px;font-family:'Liberation Sans', sans-serif;font-size:19.5px;color:#5f826b;transform:scaleX(1.0629)">processing a single request/response.</span>
<span class="t" style="left:780.96px;top:347.80px;font-family:'Liberation Sans', 'Noto Sans CJK SC', sans-serif;font-size:18px;color:#dfe1e5;transform:scaleX(1.0412)">文本</span>
<span class="t" style="left:855.60px;top:345.00px;font-family:'Liberation Sans', sans-serif;font-size:19.4px;color:#dfe1e5;transform:scaleX(0.9687)">Jar Editor</span>
<span class="t" style="left:80.00px;top:402.00px;font-family:'Liberation Sans', 'Noto Sans CJK SC', sans-serif;font-size:18px;font-weight:bold;color:#dfe1e5;transform:scaleX(1.0000)">调试</span>
<span class="t" style="left:188.46px;top:398.80px;font-family:'Liberation Sans', sans-serif;font-size:19.4px;color:#dfe1e5;transform:scaleX(1.0417)">Ncm4Application</span>
<span class="t" style="left:519.99px;top:458.30px;font-family:'Liberation Sans', 'Noto Sans CJK SC', sans-serif;font-size:18px;color:#dfe1e5;transform:scaleX(1.0112)">线程和变量</span>
<span class="t" style="left:648.00px;top:458.30px;font-family:'Liberation Sans', 'Noto Sans CJK SC', sans-serif;font-size:18px;color:#dfe1e5;transform:scaleX(1.0189)">控制台</span>
<span class="t" style="left:770.06px;top:456.00px;font-family:'Liberation Sans', sans-serif;font-size:19.4px;color:#dfe1e5;transform:scaleX(0.9395)">Bean</span>
<span class="t" style="left:879.40px;top:458.30px;font-family:'Liberation Sans', 'Noto Sans CJK SC', sans-serif;font-size:18px;color:#dfe1e5;transform:scaleX(0.9944)">运行状况</span>
<span class="t" style="left:1018.61px;top:458.30px;font-family:'Liberation Sans', 'Noto Sans CJK SC', sans-serif;font-size:18px;color:#dfe1e5;transform:scaleX(0.9943)">映射</span>
<span class="t" style="left:1122.40px;top:458.30px;font-family:'Liberation Sans', 'Noto Sans CJK SC', sans-serif;font-size:18px;color:#dfe1e5;transform:scaleX(0.9889)">环境</span>
<span class="t" style="left:108.36px;top:507.20px;font-family:'Liberation Sans', sans-serif;font-size:19.4px;color:#dfe1e5;transform:scaleX(1.0373)">"http-nio-8080-exec-1"@5,344</span>
<span class="t" style="left:384.41px;top:509.60px;font-family:'Liberation Sans', 'Noto Sans CJK SC', sans-serif;font-size:18px;color:#dfe1e5;transform:scaleX(0.9943)">在组</span>
<span class="t" style="left:422.30px;top:507.20px;font-family:'Liberation Sans', sans-serif;font-size:19.4px;color:#dfe1e5;transform:scaleX(0.9898)">“main”:</span>
<span class="t" style="left:486.61px;top:509.60px;font-family:'Liberation Sans', 'Noto Sans CJK SC', sans-serif;font-size:18px;color:#dfe1e5;transform:scaleX(0.9901)">正在运行</span>
<span class="t" style="left:1554.99px;top:509.00px;font-family:'DejaVu Sans Mono', 'Noto Serif CJK SC', serif;font-size:17.7px;color:#6f737a;transform:scaleX(1.0095)">对表达式求值</span>
<span class="t" style="left:1661.42px;top:509.00px;font-family:'DejaVu Sans Mono', 'Liberation Mono', monospace;font-size:16.5px;color:#6f737a;transform:scaleX(1.0603)">(Enter)</span>
<span class="t" style="left:1732.99px;top:509.00px;font-family:'DejaVu Sans Mono', 'Noto Serif CJK SC', serif;font-size:17.7px;color:#6f737a;transform:scaleX(1.0115)">或添加监视</span>
<span class="t" style="left:1821.53px;top:509.00px;font-family:'DejaVu Sans Mono', 'Liberation Mono', monospace;font-size:16.5px;color:#6f737a;transform:scaleX(1.0231)">(Ctrl+Shift+Enter)</span>
<span class="t" style="left:114.02px;top:554.60px;font-family:'Liberation Sans', sans-serif;font-size:19.4px;color:#73777d;transform:scaleX(0.9814)">invoke:97,</span>
<span class="t" style="left:204.60px;top:554.60px;font-family:'Liberation Sans', sans-serif;font-size:19.4px;color:#73777d;transform:scaleX(0.9969)">StandardContextValve</span>
<span class="t" style="left:403.02px;top:554.60px;font-family:'Liberation Sans', sans-serif;font-size:19.4px;font-style:italic;color:#73777d;transform:scaleX(0.9848)">(org.apache.catalina.core)</span>
<span class="t" style="left:114.02px;top:590.60px;font-family:'Liberation Sans', sans-serif;font-size:19.4px;color:#73777d;transform:scaleX(0.9794)">invoke:540,</span>
<span class="t" style="left:216.40px;top:590.60px;font-family:'Liberation Sans', sans-serif;font-size:19.4px;color:#73777d;transform:scaleX(0.9911)">AuthenticatorBase</span>
<span class="t" style="left:380.00px;top:590.60px;font-family:'Liberation Sans', sans-serif;font-size:19.4px;font-style:italic;color:#73777d;transform:scaleX(1.0020)">(org.apache.catalina.authenticator)</span>
<span class="t" style="left:114.01px;top:626.60px;font-family:'Liberation Sans', sans-serif;font-size:19.4px;color:#73777d;transform:scaleX(0.9876)">invoke:135,</span>
<span class="t" style="left:216.01px;top:626.60px;font-family:'Liberation Sans', sans-serif;font-size:19.4px;color:#73777d;transform:scaleX(0.9939)">StandardHostValve</span>
<span class="t" style="left:387.02px;top:626.60px;font-family:'Liberation Sans', sans-serif;font-size:19.4px;font-style:italic;color:#73777d;transform:scaleX(0.9848)">(org.apache.catalina.core)</span>
<span class="t" style="left:114.03px;top:662.60px;font-family:'Liberation Sans', sans-serif;font-size:19.4px;color:#73777d;transform:scaleX(0.9721)">invoke:92,</span>
<span class="t" style="left:205.01px;top:662.60px;font-family:'Liberation Sans', sans-serif;font-size:19.4px;color:#73777d;transform:scaleX(0.9864)">ErrorReportValve</span>
<span class="t" style="left:358.63px;top:662.60px;font-family:'Liberation Sans', sans-serif;font-size:19.4px;font-style:italic;color:#73777d;transform:scaleX(0.9660)">(org.apache.catalina.valves)</span>
<span class="t" style="left:114.02px;top:698.60px;font-family:'Liberation Sans', sans-serif;font-size:19.4px;color:#73777d;transform:scaleX(0.9814)">invoke:78,</span>
<span class="t" style="left:204.61px;top:698.60px;font-family:'Liberation Sans', sans-serif;font-size:19.4px;color:#73777d;transform:scaleX(0.9859)">StandardEngineValve</span>
<span class="t" style="left:395.02px;top:698.60px;font-family:'Liberation Sans', sans-serif;font-size:19.4px;font-style:italic;color:#73777d;transform:scaleX(0.9848)">(org.apache.catalina.core)</span>
<span class="t" style="left:115.00px;top:734.60px;font-family:'Liberation Sans', sans-serif;font-size:19.4px;color:#73777d;transform:scaleX(0.9476)">service:357,</span>
<span class="t" style="left:217.99px;top:734.60px;font-family:'Liberation Sans', sans-serif;font-size:19.4px;color:#73777d;transform:scaleX(1.0078)">CoyoteAdapter</span>
<span class="t" style="left:356.01px;top:734.60px;font-family:'Liberation Sans', sans-serif;font-size:19.4px;font-style:italic;color:#73777d;transform:scaleX(0.9911)">(org.apache.catalina.connector)</span>
<span class="t" style="left:115.00px;top:770.60px;font-family:'Liberation Sans', sans-serif;font-size:19.4px;color:#dfe1e5;transform:scaleX(0.9417)">service:382,</span>
<span class="t" style="left:218.40px;top:770.60px;font-family:'Liberation Sans', sans-serif;font-size:19.4px;color:#dfe1e5;transform:scaleX(0.9972)">Http11Processor</span>
<span class="t" style="left:367.98px;top:770.60px;font-family:'Liberation Sans', sans-serif;font-size:19.4px;font-style:italic;color:#dfe1e5;transform:scaleX(1.0202)">(org.apache.coyote.http11)</span>
<span class="t" style="left:114.05px;top:806.60px;font-family:'Liberation Sans', sans-serif;font-size:19.4px;color:#73777d;transform:scaleX(0.9490)">process:65,</span>
<span class="t" style="left:214.40px;top:806.60px;font-family:'Liberation Sans', sans-serif;font-size:19.4px;color:#73777d;transform:scaleX(0.9831)">AbstractProcessorLight</span>
<span class="t" style="left:419.01px;top:806.60px;font-family:'Liberation Sans', sans-serif;font-size:19.4px;font-style:italic;color:#73777d;transform:scaleX(0.9918)">(org.apache.coyote)</span>
<span class="t" style="left:114.04px;top:842.60px;font-family:'Liberation Sans', sans-serif;font-size:19.4px;color:#73777d;transform:scaleX(0.9560)">process:895,</span>
<span class="t" style="left:225.60px;top:842.60px;font-family:'Liberation Sans', sans-serif;font-size:19.4px;color:#73777d;transform:scaleX(1.0107)">AbstractProtocol$ConnectionHandler</span>
<span class="t" style="left:554.51px;top:842.60px;font-family:'Liberation Sans', sans-serif;font-size:19.4px;font-style:italic;color:#73777d;transform:scaleX(0.9877)">(org.apache.coyote)</span>
<span class="t" style="left:114.02px;top:878.60px;font-family:'Liberation Sans', sans-serif;font-size:19.4px;color:#73777d;transform:scaleX(0.9780)">doRun:1732,</span>
<span class="t" style="left:228.02px;top:878.60px;font-family:'Liberation Sans', sans-serif;font-size:19.4px;color:#73777d;transform:scaleX(0.9847)">NioEndpoint$SocketProcessor</span>
<span class="t" style="left:493.99px;top:878.60px;font-family:'Liberation Sans', sans-serif;font-size:19.4px;font-style:italic;color:#73777d;transform:scaleX(1.0111)">(org.apache.tomcat.util.net)</span>
<span class="t" style="left:114.01px;top:914.60px;font-family:'Liberation Sans', sans-serif;font-size:19.4px;color:#73777d;transform:scaleX(0.9862)">run:49,</span>
<span class="t" style="left:177.47px;top:914.60px;font-family:'Liberation Sans', sans-serif;font-size:19.4px;color:#73777d;transform:scaleX(0.9344)">SocketProcessorBase</span>
<span class="t" style="left:361.99px;top:914.60px;font-family:'Liberation Sans', sans-serif;font-size:19.4px;font-style:italic;color:#73777d;transform:scaleX(1.0111)">(org.apache.tomcat.util.net)</span>
<span class="t" style="left:113.97px;top:950.60px;font-family:'Liberation Sans', sans-serif;font-size:19.4px;color:#73777d;transform:scaleX(1.0257)">runWorker:1191,</span>
<span class="t" style="left:264.40px;top:950.60px;font-family:'Liberation Sans', sans-serif;font-size:19.4px;color:#73777d;transform:scaleX(0.9605)">ThreadPoolExecutor</span>
<span class="t" style="left:441.00px;top:950.60px;font-family:'Liberation Sans', sans-serif;font-size:19.4px;font-style:italic;color:#73777d;transform:scaleX(1.0037)">(org.apache.tomcat.util.threads)</span>
<span class="t" style="left:114.00px;top:986.60px;font-family:'Liberation Sans', sans-serif;font-size:19.4px;color:#73777d;transform:scaleX(1.0029)">run:659,</span>
<span class="t" style="left:190.00px;top:986.60px;font-family:'Liberation Sans', sans-serif;font-size:19.4px;color:#73777d;transform:scaleX(0.9772)">ThreadPoolExecutor$Worker</span>
<span class="t" style="left:440.79px;top:986.60px;font-family:'Liberation Sans', sans-serif;font-size:19.4px;font-style:italic;color:#73777d;transform:scaleX(1.0055)">(org.apache.tomcat.util.threads)</span>
<span class="t" style="left:114.00px;top:1022.60px;font-family:'Liberation Sans', sans-serif;font-size:19.4px;color:#73777d;transform:scaleX(0.9966)">run:61,</span>
<span class="t" style="left:178.60px;top:1022.60px;font-family:'Liberation Sans', sans-serif;font-size:19.4px;color:#73777d;transform:scaleX(0.9989)">TaskThread$WrappingRunnable</span>
<span class="t" style="left:461.79px;top:1022.60px;font-family:'Liberation Sans', sans-serif;font-size:19.4px;font-style:italic;color:#73777d;transform:scaleX(1.0055)">(org.apache.tomcat.util.threads)</span>
<span class="t" style="left:114.00px;top:1058.60px;font-family:'Liberation Sans', sans-serif;font-size:19.4px;color:#73777d;transform:scaleX(1.0029)">run:745,</span>
<span class="t" style="left:190.00px;top:1058.60px;font-family:'Liberation Sans', sans-serif;font-size:19.4px;color:#73777d;transform:scaleX(0.9426)">Thread</span>
<span class="t" style="left:255.01px;top:1058.60px;font-family:'Liberation Sans', sans-serif;font-size:19.4px;font-style:italic;color:#73777d;transform:scaleX(0.9933)">(java.lang)</span>
<span class="t" style="left:1618.00px;top:556.60px;font-family:'Liberation Sans', sans-serif;font-size:19.4px;color:#eda274;transform:scaleX(0.9840)">this.request</span>
<span class="t" style="left:1723.10px;top:556.60px;font-family:'Liberation Sans', sans-serif;font-size:19.4px;color:#dfe1e5;transform:scaleX(0.9000)">=</span>
<span class="t" style="left:1741.00px;top:556.60px;font-family:'Liberation Sans', sans-serif;font-size:19.4px;color:#6f737a;transform:scaleX(0.9755)">{Request@6114}</span>
<span class="t" style="left:1890.59px;top:556.60px;font-family:'Liberation Sans', sans-serif;font-size:19.4px;color:#dfe1e5;transform:scaleX(1.0110)">"R( /hello)"</span>
<span class="t" style="left:1618.00px;top:592.60px;font-family:'Liberation Sans', sans-serif;font-size:19.4px;color:#eda274;transform:scaleX(0.9867)">this</span>
<span class="t" style="left:1654.06px;top:592.60px;font-family:'Liberation Sans', sans-serif;font-size:19.4px;color:#dfe1e5;transform:scaleX(0.9400)">=</span>
<span class="t" style="left:1672.00px;top:592.60px;font-family:'Liberation Sans', sans-serif;font-size:19.4px;color:#6f737a;transform:scaleX(0.9936)">{Http11Processor@6093}</span>
<span class="t" style="left:1618.00px;top:628.60px;font-family:'Liberation Sans', sans-serif;font-size:19.4px;color:#eda274;transform:scaleX(0.9969)">socketWrapper</span>
<span class="t" style="left:1754.06px;top:628.60px;font-family:'Liberation Sans', sans-serif;font-size:19.4px;color:#dfe1e5;transform:scaleX(0.9400)">=</span>
<span class="t" style="left:1772.00px;top:628.60px;font-family:'Liberation Sans', sans-serif;font-size:19.4px;color:#6f737a;transform:scaleX(1.0085)">{NioEndpoint$NioSocketWrapper@5349}</span>
<span class="t" style="left:1617.24px;top:664.60px;font-family:'Liberation Sans', sans-serif;font-size:19.4px;color:#eda274;transform:scaleX(1.0563)">rp</span>
<span class="t" style="left:1642.06px;top:664.60px;font-family:'Liberation Sans', sans-serif;font-size:19.4px;color:#dfe1e5;transform:scaleX(0.9400)">=</span>
<span class="t" style="left:1660.00px;top:664.60px;font-family:'Liberation Sans', sans-serif;font-size:19.4px;color:#6f737a;transform:scaleX(0.9800)">{RequestInfo@6107}</span>
<span class="t" style="left:1616.96px;top:700.60px;font-family:'Liberation Sans', sans-serif;font-size:19.4px;color:#eda274;transform:scaleX(1.0390)">keptAlive</span>
<span class="t" style="left:1704.06px;top:700.60px;font-family:'Liberation Sans', sans-serif;font-size:19.4px;color:#dfe1e5;transform:scaleX(0.9400)">=</span>
<span class="t" style="left:1722.00px;top:700.60px;font-family:'Liberation Sans', sans-serif;font-size:19.4px;color:#dfe1e5;transform:scaleX(1.0182)">true</span>
<span class="t" style="left:1618.00px;top:736.60px;font-family:'Liberation Sans', sans-serif;font-size:19.4px;color:#eda274;transform:scaleX(0.9786)">sendfileState</span>
<span class="t" style="left:1734.06px;top:736.60px;font-family:'Liberation Sans', sans-serif;font-size:19.4px;color:#dfe1e5;transform:scaleX(0.9400)">=</span>
<span class="t" style="left:1752.00px;top:736.60px;font-family:'Liberation Sans', sans-serif;font-size:19.4px;color:#6f737a;transform:scaleX(0.9759)">{SendfileState@6108}</span>
<span class="t" style="left:1944.41px;top:736.60px;font-family:'Liberation Sans', sans-serif;font-size:19.4px;color:#dfe1e5;transform:scaleX(0.9853)">"DONE"</span>
<span class="t" style="left:1617.03px;top:772.60px;font-family:'Liberation Sans', sans-serif;font-size:19.4px;color:#eda274;transform:scaleX(0.9659)">maxKeepAliveRequests</span>
<span class="t" style="left:1822.06px;top:772.60px;font-family:'Liberation Sans', sans-serif;font-size:19.4px;color:#dfe1e5;transform:scaleX(0.9400)">=</span>
<span class="t" style="left:1840.01px;top:772.60px;font-family:'Liberation Sans', sans-serif;font-size:19.4px;color:#dfe1e5;transform:scaleX(0.9871)">100</span>
<span class="t" style="left:1617.00px;top:808.60px;font-family:'Liberation Sans', sans-serif;font-size:19.4px;color:#eda274;transform:scaleX(1.0000)">request</span>
<span class="t" style="left:1688.06px;top:808.60px;font-family:'Liberation Sans', sans-serif;font-size:19.4px;color:#dfe1e5;transform:scaleX(0.9400)">=</span>
<span class="t" style="left:1706.00px;top:808.60px;font-family:'Liberation Sans', sans-serif;font-size:19.4px;color:#6f737a;transform:scaleX(0.9769)">{Request@6114}</span>
<span class="t" style="left:1855.38px;top:808.60px;font-family:'Liberation Sans', sans-serif;font-size:19.4px;color:#dfe1e5;transform:scaleX(1.0176)">"R( /hello)"</span>
<span class="t" style="left:1617.01px;top:844.60px;font-family:'Liberation Sans', sans-serif;font-size:19.4px;color:#eda274;transform:scaleX(0.9928)">keepAlive</span>
<span class="t" style="left:1707.06px;top:844.60px;font-family:'Liberation Sans', sans-serif;font-size:19.4px;color:#dfe1e5;transform:scaleX(0.9400)">=</span>
<span class="t" style="left:1725.00px;top:844.60px;font-family:'Liberation Sans', sans-serif;font-size:19.4px;color:#dfe1e5;transform:scaleX(1.0303)">true</span>
<span class="t" style="left:1617.03px;top:880.60px;font-family:'Liberation Sans', sans-serif;font-size:19.4px;color:#eda274;transform:scaleX(0.9692)">response</span>
<span class="t" style="left:1700.06px;top:880.60px;font-family:'Liberation Sans', sans-serif;font-size:19.4px;color:#dfe1e5;transform:scaleX(0.9400)">=</span>
<span class="t" style="left:1718.00px;top:880.60px;font-family:'Liberation Sans', sans-serif;font-size:19.4px;color:#6f737a;transform:scaleX(0.9605)">{Response@6115}</span>
<div class="clip" style="left:61px;top:0px;width:669px;height:40px"><span class="t" style="left:192.51px;top:-4.00px;font-family:'Liberation Sans', sans-serif;font-size:19.4px;color:#dfe1e5;transform:scaleX(0.9920)">com.test.ncm4</span><span class="t" style="left:221.47px;top:32.70px;font-family:'Liberation Sans', sans-serif;font-size:19.4px;color:#dfe1e5;transform:scaleX(1.0316)">controller</span></div>
<div class="clip" style="left:61px;top:360px;width:671px;height:18px"><span class="t" style="left:132.20px;top:9.00px;font-family:'Liberation Sans', sans-serif;font-size:19.4px;color:#dfe1e5;transform:scaleX(0.9839)">setSocketWrapper(SocketWrapperBase&lt;?&gt;): void</span></div>
<div class="clip" style="left:747px;top:0px;width:174px;height:334px"><span class="t" style="left:53.14px;top:68.90px;font-family:'DejaVu Sans', 'Liberation Sans', sans-serif;font-size:21.8px;color:#4b5059;transform:scaleX(1.0560)">45</span><span class="t" style="left:53.14px;top:109.40px;font-family:'DejaVu Sans', 'Liberation Sans', sans-serif;font-size:21.8px;color:#4b5059;transform:scaleX(1.0560)">46</span><span class="t" style="left:53.14px;top:149.80px;font-family:'DejaVu Sans', 'Liberation Sans', sans-serif;font-size:21.8px;color:#4b5059;transform:scaleX(1.0560)">47</span><span class="t" style="left:53.14px;top:190.20px;font-family:'DejaVu Sans', 'Liberation Sans', sans-serif;font-size:21.8px;color:#4b5059;transform:scaleX(1.0560)">48</span><span class="t" style="left:53.14px;top:230.70px;font-family:'DejaVu Sans', 'Liberation Sans', sans-serif;font-size:21.8px;color:#4b5059;transform:scaleX(1.0560)">49</span><span class="t" style="left:53.14px;top:271.10px;font-family:'DejaVu Sans', 'Liberation Sans', sans-serif;font-size:21.8px;color:#4b5059;transform:scaleX(1.0560)">50</span><span class="t" style="left:53.14px;top:311.60px;font-family:'DejaVu Sans', 'Liberation Sans', sans-serif;font-size:21.8px;color:#4b5059;transform:scaleX(1.0560)">51</span></div>
<div class="clip" style="left:923px;top:0px;width:1378px;height:321px"><span class="t" style="left:1.80px;top:65.80px;font-family:'DejaVu Sans Mono', 'Liberation Mono', monospace;font-size:24.95px;color:#bcbec4;transform:scaleX(1.0000)"><span style="color:#cf8e6d">public abstract class </span>AbstractProcessor <span style="color:#cf8e6d">extends </span>AbstractProcessorLight <span style="color:#cf8e6d">implements </span>ActionHook {</span><span class="t" style="left:1.80px;top:146.80px;font-family:'DejaVu Sans Mono', 'Liberation Mono', monospace;font-size:24.95px;color:#bcbec4;transform:scaleX(1.0000)">    <span style="color:#cf8e6d">private static final </span>StringManager <span style="color:#c77dbb;font-style:italic">sm</span> = StringManager.<span style="font-style:italic">getManager</span>(AbstractProcessor.<span style="color:#cf8e6d">class</span>);</span><span class="t" style="left:2.80px;top:227.70px;font-family:'DejaVu Sans Mono', 'Liberation Mono', monospace;font-size:24.95px;color:#bcbec4;transform:scaleX(1.0000)">    <span style="color:#7a7e85">// Used to avoid useless B2C conversion on the host name.</span></span><span class="t" style="left:1.80px;top:268.10px;font-family:'DejaVu Sans Mono', 'Liberation Mono', monospace;font-size:24.95px;color:#bcbec4;transform:scaleX(1.0000)">    <span style="color:#cf8e6d">private char</span>[] <span style="color:#c77dbb">hostNameC</span> = <span style="color:#cf8e6d">new char</span>[<span style="color:#2aacb8">0</span>];</span></div>
<div class="clip" style="left:1539px;top:620px;width:762px;height:40px"><span class="t" style="left:597.71px;top:8.60px;font-family:'Liberation Sans', sans-serif;font-size:19.4px;color:#dfe1e5;transform:scaleX(0.9925)">"org.apache.tomcat.util.net.NioEndpoint$NioSocketWrapper</span></div>
<div style="position:absolute;left:1608px;top:48px;width:378px;height:69px;border:6px solid #f93a3a;border-radius:7px;"></div>
<div style="position:absolute;left:201px;top:801px;width:225px;height:27px;border:6px solid #f93a3a;border-radius:7px;"></div>
</div></body></html>
